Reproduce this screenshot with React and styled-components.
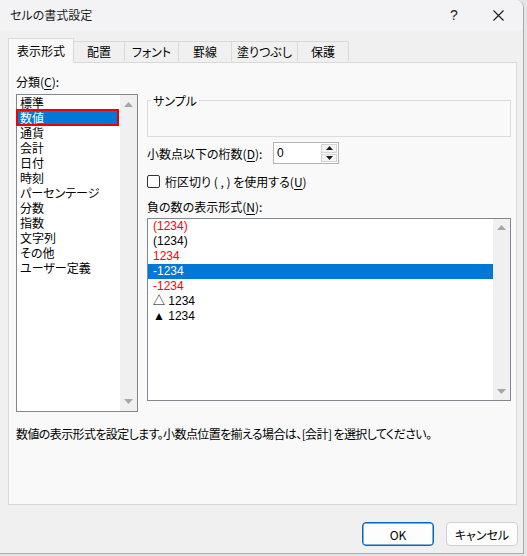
import React from 'react';
import styled, { createGlobalStyle } from 'styled-components';

const Global = createGlobalStyle`
  html, body { margin: 0; padding: 0; background: #e4e4e4; }
  body {
    font-family: "Noto Sans CJK JP", "Noto Sans", sans-serif;
    font-size: 12px;
    color: #000;
    font-feature-settings: "palt";
  }
  #root { width: 527px; height: 556px; overflow: hidden; }
`;

const Window = styled.div`
  width: 523px;
  height: 553px;
  background: #f0f0f0;
  border-right: 1px solid #a9a9a9;
  border-bottom: 1px solid #a9a9a9;
  border-top-right-radius: 8px;
  display: flex;
  flex-direction: column;
  overflow: hidden;
`;

const TitleBar = styled.div`
  height: 30px;
  flex: none;
  background: #f3f3f5;
  display: flex;
  align-items: center;
  padding-left: 10px;
  padding-right: 3px;
`;

const Title = styled.div`
  flex: 1;
  line-height: 30px;
  font-size: 12px;
  color: #1a1a1a;
`;

const CaptionButton = styled.div`
  width: 44px;
  height: 30px;
  display: flex;
  align-items: center;
  justify-content: center;
  font-family: "Liberation Sans", sans-serif;
  font-size: 14px;
  color: #1a1a1a;
`;

const Body = styled.div`
  flex: 1;
  display: flex;
  flex-direction: column;
  padding: 8px 6px 0 8px;
`;

const TabRow = styled.div`
  display: flex;
  align-items: flex-end;
  height: 24px;
  position: relative;
  z-index: 1;
`;

const Tab = styled.div`
  box-sizing: border-box;
  width: ${p => p.$w}px;
  height: ${p => (p.$active ? 25 : 21)}px;
  margin-bottom: ${p => (p.$active ? -1 : 0)}px;
  margin-left: ${p => (p.$active ? 0 : -1)}px;
  background: ${p => (p.$active ? '#f9f9f9' : '#f0f0f0')};
  border: 1px solid #d9d9d9;
  border-bottom: ${p => (p.$active ? 'none' : '1px solid transparent')};
  display: flex;
  align-items: center;
  justify-content: center;
  padding-bottom: ${p => (p.$active ? 2 : 0)}px;
  font-size: 12px;
  line-height: 15px;
  &:first-child { margin-left: 0; }
`;

const Panel = styled.div`
  box-sizing: border-box;
  height: 443px;
  background: #f9f9f9;
  border: 1px solid #d9d9d9;
  padding: 11px 5px 0 7px;
  display: flex;
  flex-direction: column;
`;

const MainGrid = styled.div`
  display: grid;
  grid-template-columns: 122px 1fr;
  column-gap: 9px;
`;

const Column = styled.div`
  display: flex;
  flex-direction: column;
  padding-top: ${p => p.$top || 0}px;
`;

const Label = styled.div`
  line-height: 15px;
  height: 15px;
  margin-top: ${p => p.$mt || 0}px;
  margin-bottom: ${p => p.$mb || 0}px;
  white-space: nowrap;
  width: ${p => (p.$w ? `${p.$w}px` : 'auto')};
  flex: none;
`;

const U = styled.span`
  text-decoration: underline;
  text-underline-offset: 2px;
`;

const ListBox = styled.div`
  box-sizing: border-box;
  height: ${p => p.$h}px;
  margin-top: ${p => p.$mt || 0}px;
  border: 1px solid #828790;
  background: #fff;
  display: flex;
`;

const ListItems = styled.div`
  flex: 1;
  display: flex;
  flex-direction: column;
  font-family: ${p => (p.$latin ? '"Liberation Sans", "Noto Sans CJK JP", sans-serif' : 'inherit')};
`;

const Item = styled.div`
  height: 15px;
  line-height: 15px;
  padding-left: ${p => p.$pl}px;
  white-space: nowrap;
  color: ${p => (p.$sel ? '#fff' : p.$red ? '#ff0000' : '#000')};
  background: ${p => (p.$sel ? '#0078d7' : 'transparent')};
  margin-right: ${p => (p.$mark ? 2 : 0)}px;
  outline: ${p => (p.$mark ? '2px solid #ee0000' : 'none')};
  outline-offset: -1px;
`;

const Scrollbar = styled.div`
  width: 17px;
  flex: none;
  background: #f0f0f0;
  display: flex;
  flex-direction: column;
  justify-content: space-between;
  align-items: center;
  padding: ${p => p.$pad}px 0;
`;

const Arrow = ({ down }) => (
  <svg width="9" height="5" viewBox="0 0 9 5">
    <path d={down ? 'M0 0 H9 L4.5 5 Z' : 'M0 5 H9 L4.5 0 Z'} fill="#a6a6a6" />
  </svg>
);

const Fieldset = styled.fieldset`
  margin: 0;
  padding: 0;
  border: 1px solid #dcdcdc;
  min-width: 0;
`;

const Legend = styled.legend`
  padding: 0 2px;
  margin-left: 3px;
  line-height: 15px;
  font-size: 12px;
`;

const SampleBody = styled.div`
  height: 28px;
`;

const DigitsRow = styled.div`
  display: flex;
  align-items: center;
  height: 22px;
  margin-top: 5px;
`;

const Spinner = styled.div`
  box-sizing: border-box;
  width: 66px;
  height: 22px;
  border: 1px solid #b4b4b4;
  background: #fff;
  display: flex;
  align-items: stretch;
`;

const SpinValue = styled.div`
  flex: 1;
  padding-left: 3px;
  line-height: 20px;
  font-family: "Liberation Sans", sans-serif;
  font-size: 12px;
`;

const SpinButtons = styled.div`
  width: 16px;
  display: flex;
  flex-direction: column;
  padding: 1px 1px 1px 0;
  gap: 1px;
`;

const SpinButton = styled.div`
  flex: 1;
  background: #f4f4f4;
  border: 1px solid #d4d4d4;
  display: flex;
  align-items: center;
  justify-content: center;
`;

const SmallArrow = ({ down }) => (
  <svg width="7" height="4" viewBox="0 0 7 4">
    <path d={down ? 'M0 0 H7 L3.5 4 Z' : 'M0 4 H7 L3.5 0 Z'} fill="#1a1a1a" />
  </svg>
);

const CheckRow = styled.div`
  display: flex;
  align-items: center;
  gap: 5px;
  height: 15px;
  margin-top: 10px;
`;

const CheckBox = styled.div`
  box-sizing: border-box;
  width: 13px;
  height: 13px;
  border: 1px solid #333;
  border-radius: 2px;
  background: #fff;
`;

const Description = styled.div`
  margin-top: 14px;
  line-height: 15px;
  white-space: nowrap;
  letter-spacing: -0.6px;
`;

const Footer = styled.div`
  display: flex;
  justify-content: flex-end;
  gap: 12px;
  padding-top: 17px;
  margin-right: -1px;
`;

const Button = styled.div`
  box-sizing: border-box;
  width: 72px;
  height: 24px;
  border-radius: 4px;
  background: #fdfdfd;
  border: 1px solid ${p => (p.$primary ? '#0067c0' : '#d0d0d0')};
  box-shadow: ${p => (p.$primary ? 'inset 0 0 0 0.5px #0067c0' : 'none')};
  display: flex;
  align-items: center;
  justify-content: center;
  font-size: 12px;
`;

const tabs = [
  { label: '表示形式', w: 66, active: true },
  { label: '配置', w: 52 },
  { label: 'フォント', w: 55 },
  { label: '罫線', w: 54 },
  { label: '塗りつぶし', w: 67 },
  { label: '保護', w: 52 },
];

const categories = ['標準', '数値', '通貨', '会計', '日付', '時刻', 'パーセンテージ', '分数', '指数', '文字列', 'その他', 'ユーザー定義'];

const negatives = [
  { t: '(1234)', red: true },
  { t: '(1234)' },
  { t: '1234', red: true },
  { t: '-1234', sel: true },
  { t: '-1234', red: true },
  { t: '△ 1234' },
  { t: '▲ 1234' },
];

export default function App() {
  return (
    <>
      <Global />
      <Window>
        <TitleBar>
          <Title>セルの書式設定</Title>
          <CaptionButton>?</CaptionButton>
          <CaptionButton>
            <svg width="11" height="11" viewBox="0 0 11 11">
              <path d="M0.5 0.5 L10.5 10.5 M10.5 0.5 L0.5 10.5" stroke="#1a1a1a" strokeWidth="1.1" />
            </svg>
          </CaptionButton>
        </TitleBar>
        <Body>
          <TabRow>
            {tabs.map(t => (
              <Tab key={t.label} $w={t.w} $active={t.active}>{t.label}</Tab>
            ))}
          </TabRow>
          <Panel>
            <MainGrid>
              <Column>
                <Label $mb={5}>分類(<U>C</U>):</Label>
                <ListBox $h={318}>
                  <ListItems>
                    {categories.map(c => (
                      <Item key={c} $pl={3} $sel={c === '数値'} $mark={c === '数値'}>{c}</Item>
                    ))}
                  </ListItems>
                  <Scrollbar $pad={7}>
                    <Arrow />
                    <Arrow down />
                  </Scrollbar>
                </ListBox>
              </Column>
              <Column $top={19}>
                <Fieldset>
                  <Legend>サンプル</Legend>
                  <SampleBody />
                </Fieldset>
                <DigitsRow>
                  <Label $w={126}>小数点以下の桁数(<U>D</U>):</Label>
                  <Spinner>
                    <SpinValue>0</SpinValue>
                    <SpinButtons>
                      <SpinButton><SmallArrow /></SpinButton>
                      <SpinButton><SmallArrow down /></SpinButton>
                    </SpinButtons>
                  </Spinner>
                </DigitsRow>
                <CheckRow>
                  <CheckBox />
                  <span>桁区切り ( , ) を使用する(<U>U</U>)</span>
                </CheckRow>
                <Label $mt={10}>負の数の表示形式(<U>N</U>):</Label>
                <ListBox $h={183} $mt={4}>
                  <ListItems $latin>
                    {negatives.map((n, i) => (
                      <Item key={i} $pl={5} $red={n.red} $sel={n.sel}>{n.t}</Item>
                    ))}
                  </ListItems>
                  <Scrollbar $pad={6}>
                    <Arrow />
                    <Arrow down />
                  </Scrollbar>
                </ListBox>
              </Column>
            </MainGrid>
            <Description>数値の表示形式を設定します。小数点位置を揃える場合は、[会計] を選択してください。</Description>
          </Panel>
          <Footer>
            <Button $primary>OK</Button>
            <Button>キャンセル</Button>
          </Footer>
        </Body>
      </Window>
    </>
  );
}
